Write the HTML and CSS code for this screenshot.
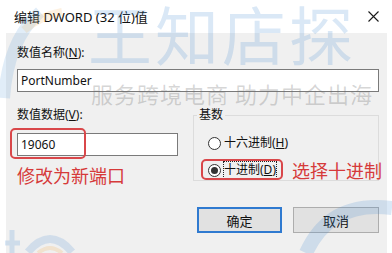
FILE: index.html
```html
<!DOCTYPE html>
<html lang="zh-CN">

<head>
    <meta charset="UTF-8">
    <meta name="viewport" content="width=device-width, initial-scale=1.0">
    <title>编辑 DWORD (32 位)值</title>
    <link rel="stylesheet" href="styles.css">
</head>

<body>
    <div class="window">
        <div class="titlebar">
            <span class="title">编辑 DWORD (32 位)值</span>
            <svg class="close" width="11" height="11" viewBox="0 0 11 11">
                <path d="M0.5 0.5L10.5 10.5M10.5 0.5L0.5 10.5" stroke="#1a1a1a" stroke-width="1.1" fill="none" />
            </svg>
        </div>

        <div class="dialog">
            <div class="label">数值名称(<u>N</u>):</div>
            <div class="input">PortNumber</div>

            <div class="row">
                <div class="col">
                    <div class="label">数值数据(<u>V</u>):</div>
                    <div class="input">19060</div>
                    <div class="note">修改为新端口</div>
                    <div class="mark mark-value"></div>
                </div>
                <fieldset class="base">
                    <legend>基数</legend>
                    <div class="radio"><span class="dot"></span>十六进制(<u>H</u>)</div>
                    <div class="radio checked"><span class="dot"></span><span class="focus">十进制(<u>D</u>)</span></div>
                </fieldset>
                <div class="mark mark-radio"></div>
                <div class="note note-radio">选择十进制</div>
            </div>

            <div class="buttons">
                <div class="btn default">确定</div>
                <div class="btn">取消</div>
            </div>
        </div>

        <!-- watermark over the screenshot -->
        <svg class="wm-shapes" width="392" height="253" viewBox="0 0 392 253">
            <path d="M4 98 Q8 40 40 12" stroke="rgba(70,140,210,0.16)" stroke-width="12" fill="none" />
            <path d="M24 30 Q40 16 62 12" stroke="rgba(245,170,70,0.16)" stroke-width="8" fill="none" />
            <path d="M12 230 V253 M5 243 H20" stroke="rgba(70,140,210,0.2)" stroke-width="5" fill="none" />
            <path d="M28 252 Q50 226 72 252" stroke="rgba(70,140,210,0.18)" stroke-width="8" fill="none" />
            <path d="M38 253 Q50 243 62 253" stroke="rgba(245,170,70,0.2)" stroke-width="4" fill="none" />
            <path d="M306 253 Q330 200 392 208" stroke="rgba(70,140,210,0.2)" stroke-width="14" fill="none" />
        </svg>
        <div class="wm-big">王知店探</div>
        <div class="wm-line">服务跨境电商 助力中企出海</div>
    </div>
</body>

</html>
```

FILE: styles.css
```css
body {
    margin: 0;
    background-color: white;
    font-family: "Noto Sans", "Noto Sans CJK SC", sans-serif;
    font-size: 12px;
    color: #111;
}

.window {
    position: relative;
    width: 392px;
    height: 253px;
    overflow: hidden;
}

.titlebar {
    height: 33px;
    display: flex;
    align-items: center;
    justify-content: space-between;
    padding: 0 13px 0 14px;
}

.title {
    font-size: 13px;
    line-height: 16px;
}

.dialog {
    margin: 0 5px 0 6px;
    height: 220px;
    background-color: #f0f0f0;
    padding: 12px 8px 0 11px;
    box-sizing: border-box;
}

.label {
    line-height: 16px;
}

.input {
    margin-top: 8px;
    height: 23px;
    box-sizing: border-box;
    border: 1px solid #7a7a7a;
    background-color: white;
    padding-left: 3px;
    line-height: 21px;
}

.row {
    position: relative;
    margin-top: 15px;
    display: flex;
    align-items: flex-start;
    gap: 15px;
}

.col {
    position: relative;
    width: 161px;
}

.col>.input {
    margin-top: 10px;
}

.note {
    margin-top: 7px;
    font-size: 18px;
    line-height: 24px;
    color: #d63a3a;
    font-family: "Noto Sans CJK SC", sans-serif;
    white-space: nowrap;
}

.base {
    margin: 0;
    width: 186px;
    height: 74px;
    box-sizing: border-box;
    border: 1px solid #dcdcdc;
    padding: 11px 0 0 14px;
}

.base legend {
    margin-left: -11px;
    padding: 0 2px;
    line-height: 16px;
}

.radio {
    height: 18px;
    display: flex;
    align-items: center;
    line-height: 16px;
}

.radio+.radio {
    margin-top: 9px;
}

.dot {
    width: 13px;
    height: 13px;
    box-sizing: border-box;
    border: 1px solid #333;
    border-radius: 50%;
    background-color: white;
    margin-right: 3px;
    display: flex;
    align-items: center;
    justify-content: center;
}

.checked .dot::after {
    content: "";
    width: 7px;
    height: 7px;
    border-radius: 50%;
    background-color: #333;
}

.focus {
    outline: 1px dotted #222;
    outline-offset: 0;
}

.mark {
    position: absolute;
    border: 2px solid #d9474a;
    border-radius: 5px;
    box-sizing: border-box;
}

.mark-value {
    left: -7px;
    top: 21px;
    width: 76px;
    height: 31px;
}

.mark-radio {
    left: 184px;
    top: 52px;
    width: 82px;
    height: 21px;
}

.note-radio {
    position: absolute;
    left: 275px;
    top: 51px;
    margin: 0;
}

.buttons {
    margin-top: 20px;
    display: flex;
    justify-content: flex-end;
    gap: 11px;
}

.btn {
    width: 86px;
    height: 26px;
    box-sizing: border-box;
    border: 1px solid #adadad;
    background-color: #e1e1e1;
    font-size: 13px;
    display: flex;
    align-items: center;
    justify-content: center;
}

.btn.default {
    width: 85px;
    border: 2px solid #2f7ad0;
}

.wm-shapes {
    position: absolute;
    left: 0;
    top: 0;
    pointer-events: none;
}

.wm-big {
    position: absolute;
    left: 88px;
    top: -4px;
    font-family: "Noto Sans CJK SC", sans-serif;
    font-size: 64px;
    line-height: 72px;
    letter-spacing: 3px;
    color: rgba(70, 140, 210, 0.2);
    pointer-events: none;
}

.wm-line {
    position: absolute;
    left: 91px;
    top: 79px;
    font-family: "Noto Sans CJK SC", sans-serif;
    font-size: 22px;
    line-height: 28px;
    letter-spacing: 1px;
    color: rgba(110, 110, 110, 0.28);
    white-space: nowrap;
    pointer-events: none;
}
```
